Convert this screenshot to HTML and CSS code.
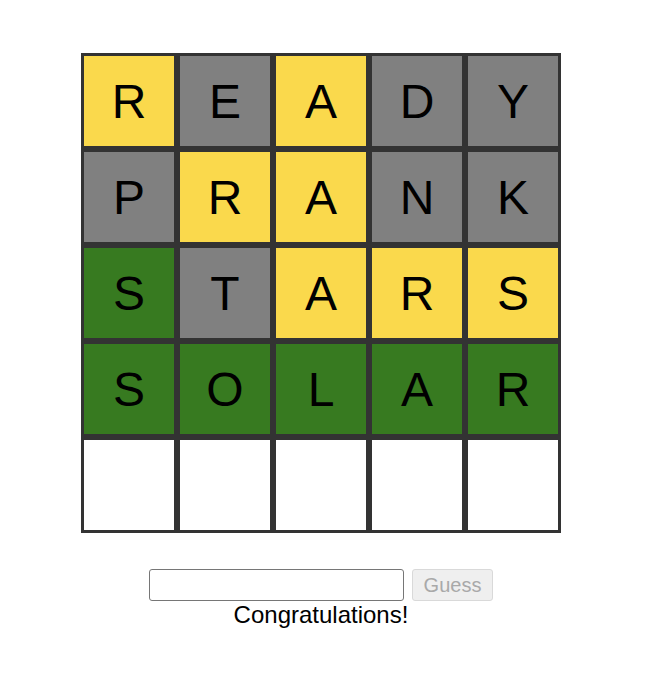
FILE: index.html
```html
<!DOCTYPE html>
<html>
<head>
<meta charset="utf-8">
<link rel="stylesheet" href="styles.css">
</head>
<body>
<div class="app">
  <div class="board">
    <div class="cell y">R</div><div class="cell g">E</div><div class="cell y">A</div><div class="cell g">D</div><div class="cell g">Y</div>
    <div class="cell g">P</div><div class="cell y">R</div><div class="cell y">A</div><div class="cell g">N</div><div class="cell g">K</div>
    <div class="cell c">S</div><div class="cell g">T</div><div class="cell y">A</div><div class="cell y">R</div><div class="cell y">S</div>
    <div class="cell c">S</div><div class="cell c">O</div><div class="cell c">L</div><div class="cell c">A</div><div class="cell c">R</div>
    <div class="cell"></div><div class="cell"></div><div class="cell"></div><div class="cell"></div><div class="cell"></div>
  </div>
  <div class="controls">
    <input class="guess-input" type="text">
    <button class="guess-btn" disabled>Guess</button>
  </div>
  <div class="message">Congratulations!</div>
</div>
</body>
</html>
```

FILE: styles.css
```css
html, body {
  margin: 0;
  padding: 0;
  background: #fff;
}
body {
  font-family: "Liberation Sans", Arial, sans-serif;
}
.app {
  width: 642px;
  display: flex;
  flex-direction: column;
  align-items: center;
  padding-top: 53px;
}
.board {
  display: grid;
  grid-template-columns: repeat(5, 96px);
  grid-auto-rows: 96px;
}
.cell {
  box-sizing: border-box;
  border: 3px solid #333;
  background: #fff;
  display: flex;
  align-items: center;
  justify-content: center;
  font-size: 48px;
  color: #000;
}
.cell.y { background: #fad94c; }
.cell.g { background: #808080; }
.cell.c { background: #377a20; }
.controls {
  margin-top: 36px;
  display: flex;
  gap: 8px;
}
.guess-input {
  box-sizing: border-box;
  width: 255px;
  height: 32px;
  border: 1px solid #767676;
  border-radius: 3px;
  font-size: 20px;
  padding: 1px 2px;
  margin: 0;
}
.guess-btn {
  box-sizing: border-box;
  width: 81px;
  height: 32px;
  margin: 0;
  font-family: "Liberation Sans", Arial, sans-serif;
  font-size: 20px;
  color: #a9a9a9;
  background: #efefef;
  border: 1px solid #d9d9d9;
  border-radius: 3px;
  padding: 0;
}
.message {
  font-size: 24px;
  color: #000;
  line-height: 27px;
}
```
